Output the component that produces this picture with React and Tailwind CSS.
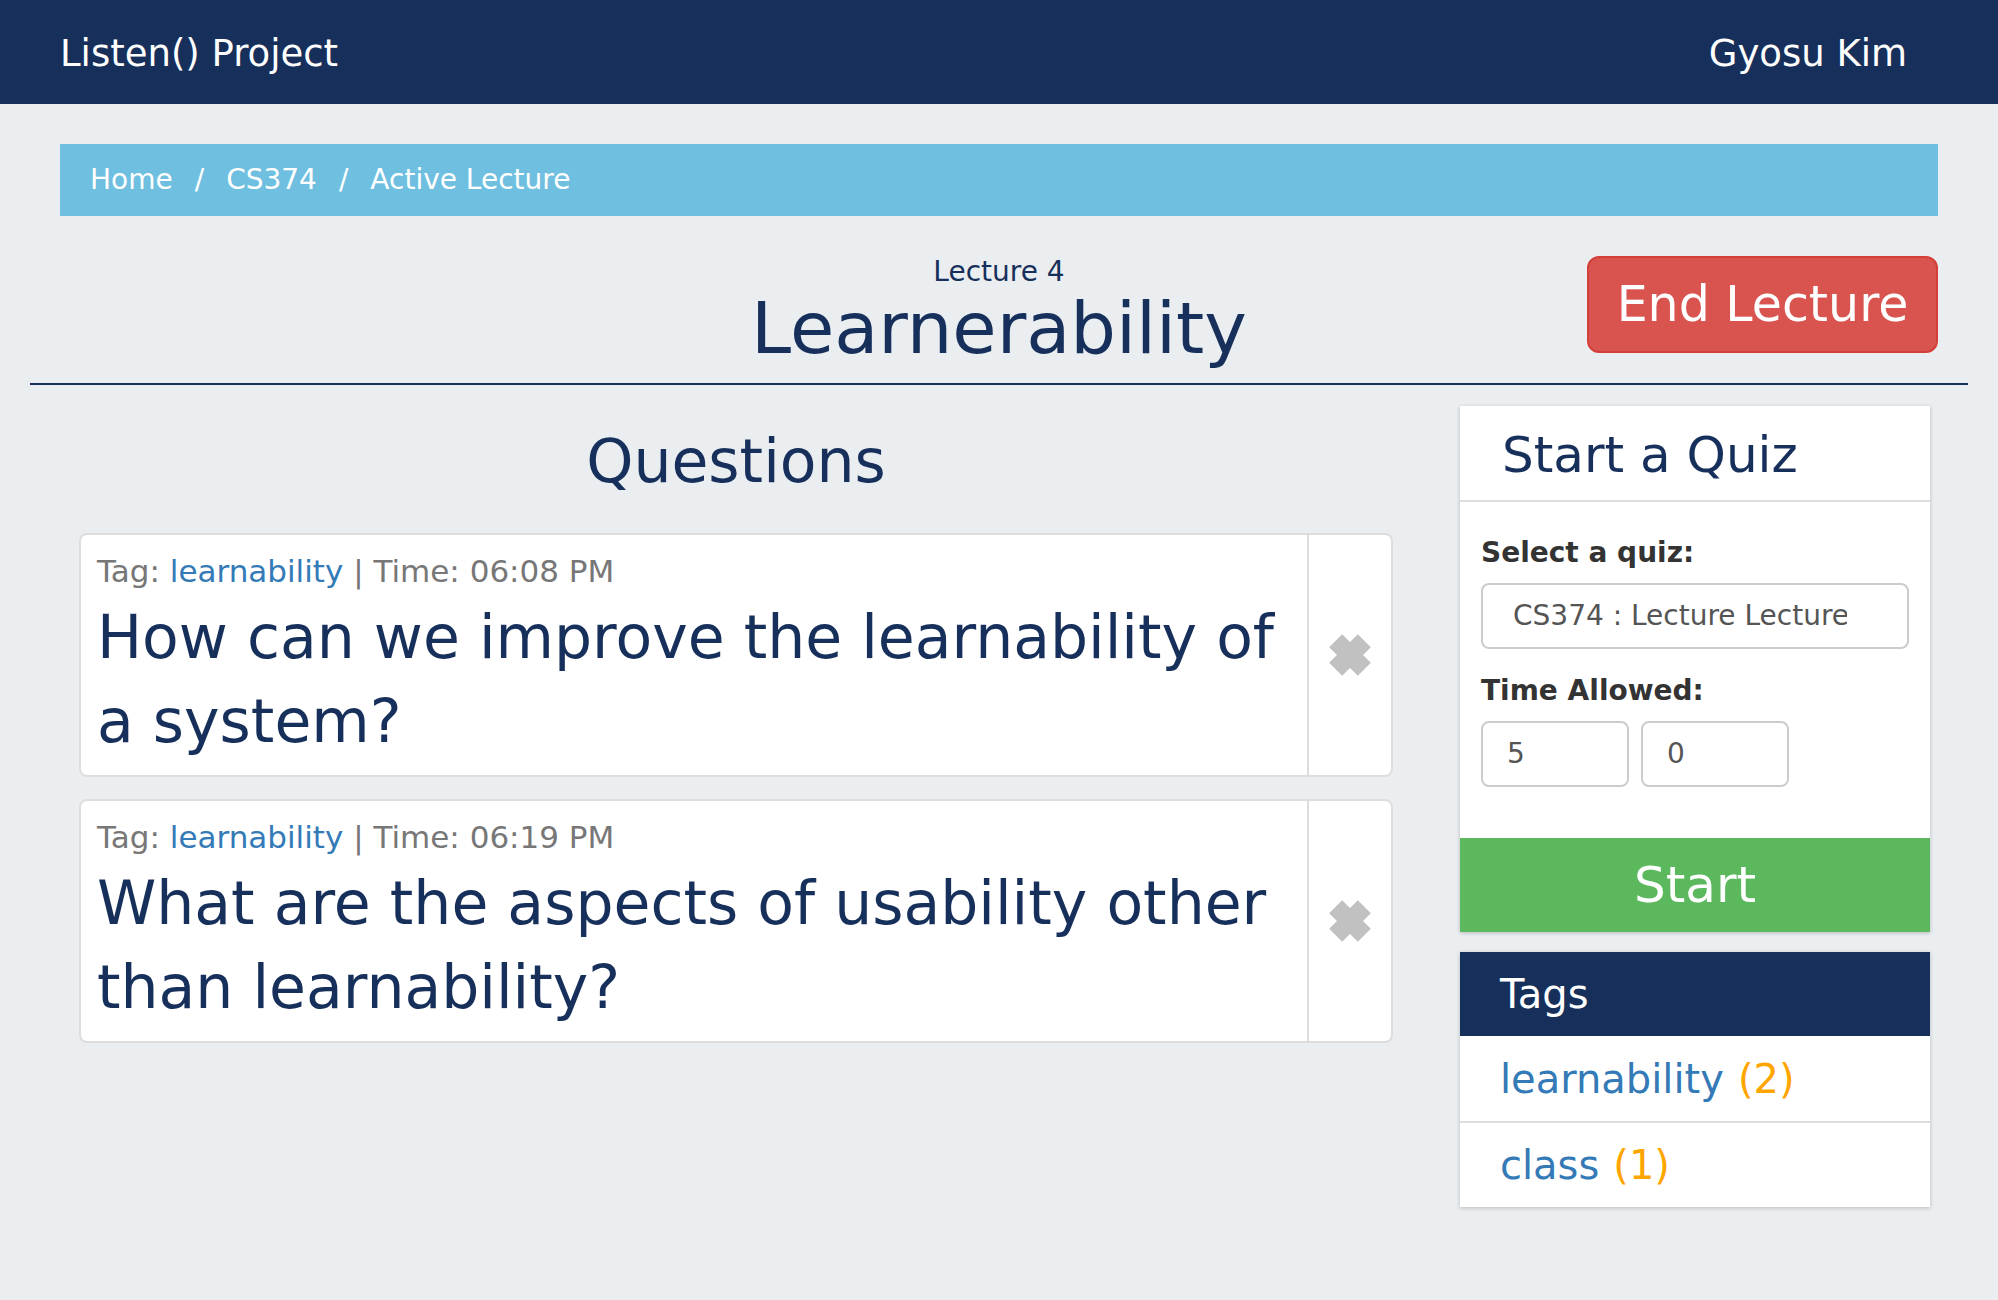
import React from 'react'

const questions = [
  { id: 1, tag: 'learnability', time: '06:08 PM', text: 'How can we improve the learnability of a system?' },
  { id: 2, tag: 'learnability', time: '06:19 PM', text: 'What are the aspects of usability other than learnability?' }
]

const tags = [
  { name: 'learnability', count: 2 },
  { name: 'class', count: 1 }
]

function RemoveIcon() {
  return (
    <svg width="44" height="44" viewBox="0 0 43 43">
      <path d="M7.5 7.5 L35.5 35.5 M35.5 7.5 L7.5 35.5" stroke="#c1c1c1" strokeWidth="18" fill="none" />
    </svg>
  )
}

function QuestionCard({ q }) {
  return (
    <div className="flex rounded-[8px] border-2 border-[#dddddd] bg-white">
      <div className="flex-1 pl-[16px] pr-[14px] pt-[15px] pb-[12px]">
        <div className="text-[31px] leading-[43px] text-[#777777]">
          Tag: <span className="text-[#337ab7]">{q.tag}</span> | Time: {q.time}
        </div>
        <div className="mt-[2px] text-[60px] leading-[84px] text-[#17305b]">{q.text}</div>
      </div>
      <div className="w-[84px] border-l-2 border-[#dddddd] flex items-center justify-center">
        <RemoveIcon />
      </div>
    </div>
  )
}

export default function App() {
  return (
    <main className="min-h-screen bg-[#eaeef1] font-['DejaVu_Sans',sans-serif]">
      {/* Navbar */}
      <nav className="h-[104px] bg-[#17305b] flex items-center justify-between pl-[60px] pr-[91px] pt-[4px] text-white text-[37px] leading-[40px]">
        <span>Listen() Project</span>
        <span>Gyosu Kim</span>
      </nav>

      {/* Breadcrumb */}
      <div className="mx-[60px] mt-[40px] h-[72px] bg-[#6fbfe0] px-[30px] py-[16px] flex text-[28px] leading-[40px] text-white">
        <span>Home</span>
        <span className="px-[22px]">/</span>
        <span>CS374</span>
        <span className="px-[22px]">/</span>
        <span>Active Lecture</span>
      </div>

      {/* Lecture header */}
      <div className="mx-[60px] mt-[38px] grid grid-cols-[1fr_auto_1fr] items-start">
        <div />
        <div className="text-center text-[#17305b]">
          <div className="text-[28px] leading-[36px]">Lecture 4</div>
          <div className="text-[72px] leading-[76px]">Learnerability</div>
        </div>
        <div className="flex justify-end">
          <button className="mt-[2px] h-[97px] w-[351px] rounded-[12px] border-2 border-[#d43f3a] bg-[#d9534f] text-white text-[49px] leading-[60px]">
            End Lecture
          </button>
        </div>
      </div>

      <div className="mx-[30px] mt-[17px] h-[2px] bg-[#17305b]" />

      <div className="mt-[21px] flex pl-[79px] pb-[60px]">
        {/* Questions */}
        <div className="w-[1314px]">
          <h2 className="mt-[22px] text-center text-[60px] leading-[66px] text-[#17305b]">Questions</h2>
          <div className="mt-[39px] flex flex-col gap-[22px]">
            {questions.map(q => <QuestionCard key={q.id} q={q} />)}
          </div>
        </div>

        {/* Sidebar */}
        <div className="ml-[67px] w-[470px]">
          <div className="bg-white shadow-[0_1px_4px_rgba(0,0,0,0.22)]">
            <div className="border-b-2 border-[#dddddd] pl-[42px] pt-[22px] pb-[17px] text-[50px] leading-[55px] text-[#17305b]">
              Start a Quiz
            </div>
            <div className="px-[21px] pt-[31px] pb-[51px]">
              <div className="font-bold text-[28px] leading-[40px] text-[#333333]">Select a quiz:</div>
              <div className="mt-[10px] h-[66px] rounded-[8px] border-2 border-[#cccccc] flex items-center pl-[30px] text-[28px] text-[#555555]">
                <span className="block w-[334px] overflow-hidden whitespace-nowrap">CS374 : Lecture Lecture 4</span>
              </div>
              <div className="mt-[22px] font-bold text-[28px] leading-[40px] text-[#333333]">Time Allowed:</div>
              <div className="mt-[10px] flex gap-[12px]">
                <div className="h-[66px] w-[148px] rounded-[8px] border-2 border-[#cccccc] flex items-center pl-[24px] text-[28px] text-[#555555]">5</div>
                <div className="h-[66px] w-[148px] rounded-[8px] border-2 border-[#cccccc] flex items-center pl-[24px] text-[28px] text-[#555555]">0</div>
              </div>
            </div>
            <div className="h-[94px] bg-[#5cb85c] flex items-center justify-center text-white text-[50px]">Start</div>
          </div>

          <div className="mt-[20px] bg-white shadow-[0_1px_4px_rgba(0,0,0,0.22)]">
            <div className="h-[84px] bg-[#17305b] flex items-center pl-[40px] text-white text-[40px]">Tags</div>
            {tags.map((t, i) => (
              <div
                key={t.name}
                className={i === 0 ? 'h-[85px] flex items-center pl-[40px] text-[40px]' : 'h-[86px] border-t-2 border-[#dddddd] flex items-center pl-[40px] text-[40px]'}
              >
                <span className="text-[#337ab7]">{t.name}</span>
                <span className="ml-[14px] text-[#ffa500]">({t.count})</span>
              </div>
            ))}
          </div>
        </div>
      </div>
    </main>
  )
}
